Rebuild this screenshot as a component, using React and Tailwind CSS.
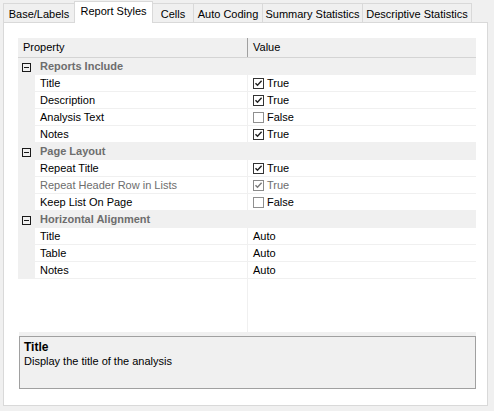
import React from 'react';

const tabs = [
  { label: 'Base/Labels', w: 'w-[71px]', cls: 'border-l' },
  { label: 'Report Styles', w: 'w-[79px]', selected: true },
  { label: 'Cells', w: 'w-[41px]', cls: 'border-r' },
  { label: 'Auto Coding', w: 'w-[69px]', cls: 'border-r' },
  { label: 'Summary Statistics', w: 'w-[100px]', cls: 'border-r' },
  { label: 'Descriptive Statistics', w: 'w-[109px]', cls: 'border-r' },
];

const groups = [
  {
    name: 'Reports Include',
    items: [
      { name: 'Title', check: true, value: 'True' },
      { name: 'Description', check: true, value: 'True' },
      { name: 'Analysis Text', check: false, value: 'False' },
      { name: 'Notes', check: true, value: 'True' },
    ],
  },
  {
    name: 'Page Layout',
    items: [
      { name: 'Repeat Title', check: true, value: 'True' },
      { name: 'Repeat Header Row in Lists', check: true, value: 'True', disabled: true },
      { name: 'Keep List On Page', check: false, value: 'False' },
    ],
  },
  {
    name: 'Horizontal Alignment',
    items: [
      { name: 'Title', value: 'Auto' },
      { name: 'Table', value: 'Auto' },
      { name: 'Notes', value: 'Auto' },
    ],
  },
];

const CheckBox = ({ checked, disabled }) => (
  <span
    className={`w-[11px] h-[11px] border bg-white flex items-center justify-center mr-[3px] ${
      checked ? (disabled ? 'border-[#8a8a8a]' : 'border-[#333333]') : 'border-[#8f8f8f]'
    }`}
  >
    {checked && (
      <svg width="9" height="9" viewBox="0 0 9 9">
        <path
          d="M1.5 4.2 L3.5 6.3 L7.6 1.8"
          fill="none"
          stroke={disabled ? '#7a7a7a' : '#222222'}
          strokeWidth="1.4"
        />
      </svg>
    )}
  </span>
);

const MinusBox = () => (
  <span className="w-[9px] h-[9px] border border-[#1a1a1a] bg-[#f0f0f0] flex items-center justify-center">
    <span className="w-[5px] h-px bg-[#1a1a1a]" />
  </span>
);

const App = () => {
  return (
    <div className="w-[494px] h-[411px] bg-[#f0f0f0] pl-[3px] pt-px font-['Liberation_Sans',Arial,sans-serif] text-[11px] text-black overflow-hidden">
      {/* tabs */}
      <div className="flex items-end h-[21px]">
        {tabs.map((t) =>
          t.selected ? (
            <div
              key={t.label}
              className={`${t.w} h-[22px] -mb-px relative z-10 bg-white border-l border-r border-t border-[#d9d9d9] flex justify-center pt-[3px] leading-[13px]`}
            >
              {t.label}
            </div>
          ) : (
            <div
              key={t.label}
              className={`${t.w} h-[19px] bg-[#f0f0f0] border-t ${t.cls} border-[#d9d9d9] flex justify-center pt-[4px] leading-[13px]`}
            >
              {t.label}
            </div>
          )
        )}
      </div>

      {/* panel */}
      <div className="w-[485px] h-[384px] bg-white border border-[#d9d9d9] pl-[14px] pt-[15px]">
        <div className="w-[458px] flex flex-col">
          {/* header */}
          <div className="h-[20px] flex bg-[#f0f0f0] border-b border-[#d4d4d4] leading-[19px]">
            <div className="w-[229px] pl-[5px]">Property</div>
            <div className="w-px bg-[#a0a0a0]" />
            <div className="flex-1 pl-[5px]">Value</div>
          </div>

          {/* rows */}
          {groups.map((g) => (
            <React.Fragment key={g.name}>
              <div className="h-[17px] flex items-center bg-[#f0f0f0]">
                <div className="w-[17px] flex justify-center pt-px">
                  <MinusBox />
                </div>
                <div className="pl-[5px] font-bold text-[#6d6d6d]">{g.name}</div>
              </div>
              {g.items.map((it) => (
                <div key={g.name + it.name} className="h-[17px] flex">
                  <div className="w-[17px] bg-[#f0f0f0]" />
                  <div
                    className={`w-[212px] border-b border-[#f0f0f0] pl-[5px] leading-[16px] ${
                      it.disabled ? 'text-[#6d6d6d]' : ''
                    }`}
                  >
                    {it.name}
                  </div>
                  <div className="w-px bg-[#f0f0f0]" />
                  <div
                    className={`flex-1 border-b border-[#f0f0f0] pl-[5px] flex items-center leading-[16px] ${
                      it.disabled ? 'text-[#6d6d6d]' : ''
                    }`}
                  >
                    {it.check !== undefined && <CheckBox checked={it.check} disabled={it.disabled} />}
                    <span>{it.value}</span>
                  </div>
                </div>
              ))}
            </React.Fragment>
          ))}

          {/* empty area */}
          <div className="h-[53px] flex">
            <div className="w-[229px]" />
            <div className="w-px bg-[#f0f0f0]" />
            <div className="flex-1" />
          </div>

          {/* splitter + help */}
          <div className="ml-px w-[457px] h-[4px] bg-[#f0f0f0]" />
          <div className="ml-px w-[457px] h-[53px] bg-[#f0f0f0] border border-[#a0a0a0] pl-[4px] pt-[3px] leading-[14px]">
            <div className="font-bold text-[12px]">Title</div>
            <div>Display the title of the analysis</div>
          </div>
        </div>
      </div>
    </div>
  );
};

export default App;
